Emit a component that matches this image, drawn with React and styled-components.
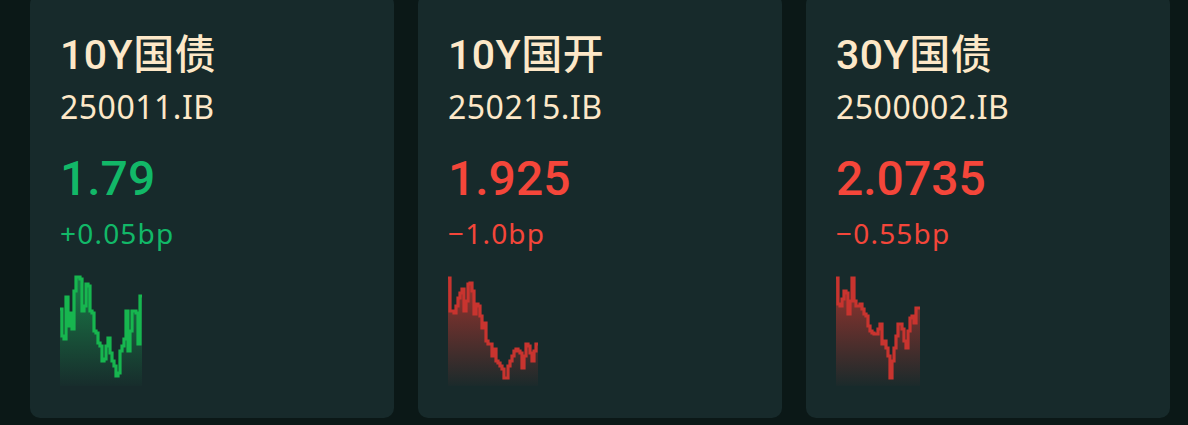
import React from "react";
import styled, { createGlobalStyle } from "styled-components";

const GlobalStyle = createGlobalStyle`
  html, body {
    margin: 0;
    padding: 0;
    background: #0b1817;
    overflow: hidden;
  }
  body {
    font-family: "Noto Sans", "Noto Sans CJK SC", sans-serif;
  }
`;

const Grid = styled.div`
  display: grid;
  grid-template-columns: repeat(3, 364px);
  gap: 24px;
  padding-left: 30px;
  margin-top: -6px;
`;

const Card = styled.div`
  background: #172a2b;
  border-radius: 10px;
  padding: 37px 30px 32px;
  display: flex;
  flex-direction: column;
`;

const Title = styled.div`
  color: #fde8c8;
  font-family: Roboto, "Noto Sans CJK SC", sans-serif;
  font-size: 41px;
  line-height: 48px;
  font-weight: 500;
  letter-spacing: 0.5px;
  white-space: nowrap;
`;

const Code = styled.div`
  color: #fde8c8;
  font-size: 32px;
  line-height: 40px;
  letter-spacing: 0.5px;
  margin-top: 8px;
  font-weight: 400;
`;

const Value = styled.div`
  color: ${(p) => p.$color};
  font-family: Roboto, "Noto Sans", sans-serif;
  font-size: 48px;
  line-height: 56px;
  font-weight: 500;
  margin-top: 24px;
`;

const Change = styled.div`
  color: ${(p) => p.$color};
  font-size: 28px;
  line-height: 32px;
  letter-spacing: 1.2px;
  margin-top: 10px;
`;

const ChartWrap = styled.div`
  margin-top: 27px;
  height: 110px;
  display: flex;
`;

const TOP = 275;

function Spark({ id, data, line, fill, fillOpacity }) {
  const step = 2;
  const w = data.length * step;
  const h = 110;
  const ys = data.map((v) => v - TOP);
  let d = `M0 ${ys[0]}`;
  ys.forEach((y, i) => {
    if (i > 0) d += ` V${y}`;
    d += ` H${(i + 1) * step}`;
  });
  const area = `${d} V${h} H0 Z`;
  return (
    <svg width={w} height={h} viewBox={`0 0 ${w} ${h}`} style={{ overflow: "visible" }}>
      <defs>
        <linearGradient id={id} x1="0" y1="0" x2="0" y2="1">
          <stop offset="0%" stopColor={fill} stopOpacity={fillOpacity} />
          <stop offset="100%" stopColor={fill} stopOpacity="0.02" />
        </linearGradient>
      </defs>
      <path d={area} fill={`url(#${id})`} />
      <path d={d} fill="none" stroke={line} strokeWidth="3.2" strokeLinejoin="miter" />
    </svg>
  );
}

const GREEN = "#12b868";
const RED = "#f4463a";

const items = [
  {
    name: "10Y国债",
    code: "250011.IB",
    value: "1.79",
    change: "+0.05bp",
    color: GREEN,
    line: "#17b64f",
    fill: "#1bb45a",
    op: 0.6,
    data: [308, 335, 338, 296, 325, 312, 328, 290, 276, 276, 278, 310, 305, 283, 285, 310, 312, 330, 332, 342, 345, 360, 358, 345, 337, 352, 360, 365, 375, 372, 350, 345, 338, 310, 350, 330, 310, 310, 312, 343, 295],
  },
  {
    name: "10Y国开",
    code: "250215.IB",
    value: "1.925",
    change: "−1.0bp",
    color: RED,
    line: "#c8342f",
    fill: "#d0382f",
    op: 0.72,
    data: [277, 310, 310, 312, 305, 297, 292, 288, 310, 300, 283, 282, 290, 313, 303, 305, 315, 327, 322, 340, 343, 343, 355, 348, 360, 362, 365, 368, 377, 377, 365, 360, 355, 350, 348, 350, 352, 367, 355, 343, 345, 352, 360, 350, 343],
  },
  {
    name: "30Y国债",
    code: "2500002.IB",
    value: "2.0735",
    change: "−0.55bp",
    color: RED,
    line: "#c8342f",
    fill: "#d0382f",
    op: 0.72,
    data: [277, 303, 305, 298, 290, 292, 313, 300, 277, 300, 305, 305, 303, 308, 313, 315, 325, 330, 332, 333, 333, 328, 323, 343, 340, 347, 355, 377, 360, 347, 335, 323, 323, 328, 340, 347, 330, 317, 315, 322, 307, 307],
  },
];

export default function App() {
  return (
    <>
      <GlobalStyle />
      <Grid>
        {items.map((it, i) => (
          <Card key={it.code}>
            <Title>{it.name}</Title>
            <Code>{it.code}</Code>
            <Value $color={it.color}>{it.value}</Value>
            <Change $color={it.color}>{it.change}</Change>
            <ChartWrap>
              <Spark id={`g${i}`} data={it.data} line={it.line} fill={it.fill} fillOpacity={it.op} />
            </ChartWrap>
          </Card>
        ))}
      </Grid>
    </>
  );
}
